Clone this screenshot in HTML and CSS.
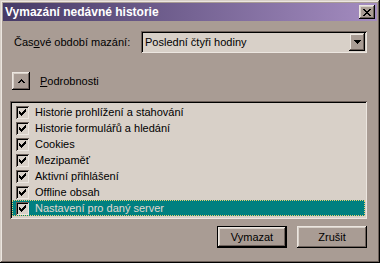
FILE: index.html
```html
<!DOCTYPE html>
<html lang="cs">
<head>
  <meta charset="UTF-8" />
  <meta name="viewport" content="width=device-width, initial-scale=1.0" />
  <title>Vymazání nedávné historie</title>
  <link rel="stylesheet" href="styles.css">
</head>
<body>
  <div class="window">
    <div class="titlebar">
      <span class="title">Vymazání nedávné historie</span>
      <span class="close-btn">
        <svg width="8" height="7" viewBox="0 0 8 7" shape-rendering="crispEdges"><path d="M0 0h2v1h-2zM6 0h2v1h-2zM1 1h2v1h-2zM5 1h2v1h-2zM2 2h4v1h-4zM3 3h2v1h-2zM2 4h4v1h-4zM1 5h2v1h-2zM5 5h2v1h-2zM0 6h2v1h-2zM6 6h2v1h-2z" fill="#000"/></svg>
      </span>
    </div>

    <div class="content">
      <div class="duration-row">
        <label class="field-label">Čas<u>o</u>vé období mazání:</label>
        <div class="combo">
          <span class="combo-value">Poslední čtyři hodiny</span>
          <span class="combo-arrow">
            <svg width="7" height="4" viewBox="0 0 7 4" shape-rendering="crispEdges"><path d="M0 0h7v1h-1v1h-1v1h-1v1h-1v-1h-1v-1h-1v-1h-1z" fill="#000"/></svg>
          </span>
        </div>
      </div>

      <div class="details-row">
        <span class="expander">
          <svg width="7" height="4" viewBox="0 0 7 4" shape-rendering="crispEdges"><path d="M3 0h1v1h1v1h1v1h1v1h-2v-1h-1v-1h-1v1h-1v1h-2v-1h1v-1h1v-1h1z" fill="#000"/></svg>
        </span>
        <span class="details-label"><u>P</u>odrobnosti</span>
      </div>

      <!-- seznam položek k vymazání -->
      <ul class="items">
        <li class="item"><span class="check"><svg width="7" height="7" viewBox="0 0 7 7" shape-rendering="crispEdges"><path d="M0 2H1V3H2V4H3V3H4V2H5V1H6V0H7V3H6V4H5V5H4V6H3V7H2V6H1V5H0Z"/></svg></span>Historie prohlížení a stahování</li>
        <li class="item"><span class="check"><svg width="7" height="7" viewBox="0 0 7 7" shape-rendering="crispEdges"><path d="M0 2H1V3H2V4H3V3H4V2H5V1H6V0H7V3H6V4H5V5H4V6H3V7H2V6H1V5H0Z"/></svg></span>Historie formulářů a hledání</li>
        <li class="item"><span class="check"><svg width="7" height="7" viewBox="0 0 7 7" shape-rendering="crispEdges"><path d="M0 2H1V3H2V4H3V3H4V2H5V1H6V0H7V3H6V4H5V5H4V6H3V7H2V6H1V5H0Z"/></svg></span>Cookies</li>
        <li class="item"><span class="check"><svg width="7" height="7" viewBox="0 0 7 7" shape-rendering="crispEdges"><path d="M0 2H1V3H2V4H3V3H4V2H5V1H6V0H7V3H6V4H5V5H4V6H3V7H2V6H1V5H0Z"/></svg></span>Mezipaměť</li>
        <li class="item"><span class="check"><svg width="7" height="7" viewBox="0 0 7 7" shape-rendering="crispEdges"><path d="M0 2H1V3H2V4H3V3H4V2H5V1H6V0H7V3H6V4H5V5H4V6H3V7H2V6H1V5H0Z"/></svg></span>Aktivní přihlášení</li>
        <li class="item"><span class="check"><svg width="7" height="7" viewBox="0 0 7 7" shape-rendering="crispEdges"><path d="M0 2H1V3H2V4H3V3H4V2H5V1H6V0H7V3H6V4H5V5H4V6H3V7H2V6H1V5H0Z"/></svg></span>Offline obsah</li>
        <li class="item selected"><span class="check"><svg width="7" height="7" viewBox="0 0 7 7" shape-rendering="crispEdges"><path d="M0 2H1V3H2V4H3V3H4V2H5V1H6V0H7V3H6V4H5V5H4V6H3V7H2V6H1V5H0Z"/></svg></span>Nastavení pro daný server</li>
      </ul>

      <div class="actions">
        <button class="btn btn-default">Vymazat</button>
        <button class="btn">Zrušit</button>
      </div>
    </div>
  </div>
</body>
</html>
```

FILE: styles.css
```css
body {
  margin: 0;
  background: #a99c94;
  font-family: 'Liberation Sans', Arial, sans-serif;
  font-size: 11px;
  color: #000;
}
.window {
  width: 380px;
  height: 263px;
  box-sizing: border-box;
  padding: 3px;
  background: #a99c94;
  box-shadow: inset -1px -1px #000, inset 1px 1px #d8d0c8, inset -2px -2px #6c605a, inset 2px 2px #ece6e0;
}
.titlebar {
  height: 18px;
  display: flex;
  align-items: center;
  justify-content: space-between;
  padding: 0 2px;
  background: linear-gradient(to right, #463a66, #a48cc0);
}
.title {
  color: #fff;
  font-weight: bold;
  font-size: 12px;
}
.close-btn {
  width: 16px;
  height: 14px;
  box-sizing: border-box;
  display: flex;
  align-items: center;
  justify-content: center;
  background: #a99c94;
  box-shadow: inset -1px -1px #000, inset 1px 1px #ece6e0, inset -2px -2px #6c605a, inset 2px 2px #d8d0c8;
}
.content {
  padding: 10px 10px 0 7px;
}
.duration-row {
  display: flex;
  align-items: center;
  height: 22px;
}
.field-label {
  width: 131px;
  box-sizing: border-box;
  padding-left: 4px;
}
.combo {
  flex: 1;
  height: 22px;
  box-sizing: border-box;
  padding: 2px;
  display: flex;
  align-items: center;
  background: #d8d0c8;
  box-shadow: inset 1px 1px #6c605a, inset -1px -1px #ece6e0, inset 2px 2px #000, inset -2px -2px #d8d0c8;
}
.combo-value {
  flex: 1;
  padding-left: 2px;
}
.combo-arrow {
  width: 16px;
  height: 18px;
  box-sizing: border-box;
  display: flex;
  align-items: center;
  justify-content: center;
  background: #a99c94;
  box-shadow: inset -1px -1px #000, inset 1px 1px #d8d0c8, inset -2px -2px #6c605a, inset 2px 2px #ece6e0;
}
.details-row {
  display: flex;
  align-items: center;
  margin-top: 19px;
  height: 18px;
}
.expander {
  width: 18px;
  height: 18px;
  box-sizing: border-box;
  margin-left: 2px;
  margin-right: 10px;
  display: flex;
  align-items: center;
  justify-content: center;
  box-shadow: inset -1px -1px #000, inset 1px 1px #ece6e0, inset -2px -2px #6c605a, inset 2px 2px #d8d0c8;
}
.items {
  list-style: none;
  margin: 11px 0 0;
  padding: 3px 2px;
  height: 118px;
  box-sizing: border-box;
  background: #d8d0c8;
  box-shadow: inset 1px 1px #6c605a, inset -1px -1px #ece6e0, inset 2px 2px #000, inset -2px -2px #d8d0c8;
}
.item {
  height: 16px;
  box-sizing: border-box;
  display: flex;
  align-items: center;
  padding-left: 4px;
}
.item.selected {
  background: #008080;
  color: #e0d8d0;
  border: 1px dotted #e8d070;
  padding-left: 3px;
}
.check {
  width: 13px;
  height: 13px;
  box-sizing: border-box;
  margin-right: 6px;
  display: flex;
  align-items: center;
  justify-content: center;
  background: #d8d0c8;
  box-shadow: inset 1px 1px #6c605a, inset -1px -1px #ece6e0, inset 2px 2px #000, inset -2px -2px #d8d0c8;
}
.check svg {
  fill: #000;
}
.actions {
  display: flex;
  justify-content: flex-end;
  gap: 10px;
  margin-top: 7px;
}
.btn {
  width: 70px;
  height: 22px;
  padding: 0;
  border: none;
  font-family: inherit;
  font-size: 11px;
  color: #000;
  background: #a99c94;
  box-shadow: inset -1px -1px #000, inset 1px 1px #ece6e0, inset -2px -2px #6c605a, inset 2px 2px #d8d0c8;
}
.btn-default {
  box-shadow: inset 0 0 0 1px #000, inset -2px -2px #000, inset 2px 2px #ece6e0, inset -3px -3px #6c605a, inset 3px 3px #d8d0c8;
}
```
